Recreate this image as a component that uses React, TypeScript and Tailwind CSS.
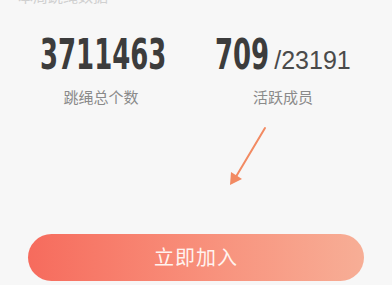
import React from 'react';

const numFont = { fontFamily: '"DejaVu Sans Condensed", "DejaVu Sans", sans-serif' };

const App = () => {
  return (
    <div
      className="relative w-[392px] h-[285px] overflow-hidden bg-[#f7f7f7] flex flex-col"
      style={{ fontFamily: '"Liberation Sans", "Noto Sans CJK SC", sans-serif' }}
    >
      <div className="-mt-[11px] pl-[18px] text-[15px] leading-[16px] text-[#d0d0d0]">
        本周跳绳数据
      </div>

      <div className="flex mt-[29px]">
        <div className="w-[202px] flex flex-col items-center">
          <span className="inline-block w-[123px] whitespace-nowrap">
            <span
              className="inline-block origin-left scale-x-[0.687] text-[42px] leading-[42px] font-bold text-[#3c3c3c]"
              style={numFont}
            >
              3711463
            </span>
          </span>
          <div className="mt-[13px] text-[15px] leading-[18px] text-[#8a8a8a]">跳绳总个数</div>
        </div>
        <div className="w-[162px] flex flex-col items-center">
          <div className="flex items-baseline whitespace-nowrap">
            <span className="inline-block w-[52px]">
              <span
                className="inline-block origin-left scale-x-[0.687] text-[42px] leading-[42px] font-bold text-[#3c3c3c]"
                style={numFont}
              >
                709
              </span>
            </span>
            <span className="ml-[7px] text-[25px] leading-[25px] text-[#4a4a4a]">/23191</span>
          </div>
          <div className="mt-[13px] text-[15px] leading-[18px] text-[#8a8a8a]">活跃成员</div>
        </div>
      </div>

      <div className="flex-1" />

      <div className="px-[28px] pb-[4px]">
        <button className="w-full h-[47px] rounded-full bg-gradient-to-r from-[#f66b5d] to-[#f7ae96] text-[20px] text-[#fff3ef] tracking-[1px]">
          立即加入
        </button>
      </div>

      <svg
        className="absolute left-0 top-0 pointer-events-none"
        width="392"
        height="285"
        viewBox="0 0 392 285"
        fill="none"
      >
        <path d="M265 128 L234 180" stroke="#f28a62" strokeWidth="2" strokeLinecap="round" />
        <path d="M230 185 L231 172 L242 179 Z" fill="#f28a62" />
      </svg>
    </div>
  );
};

export default App;
